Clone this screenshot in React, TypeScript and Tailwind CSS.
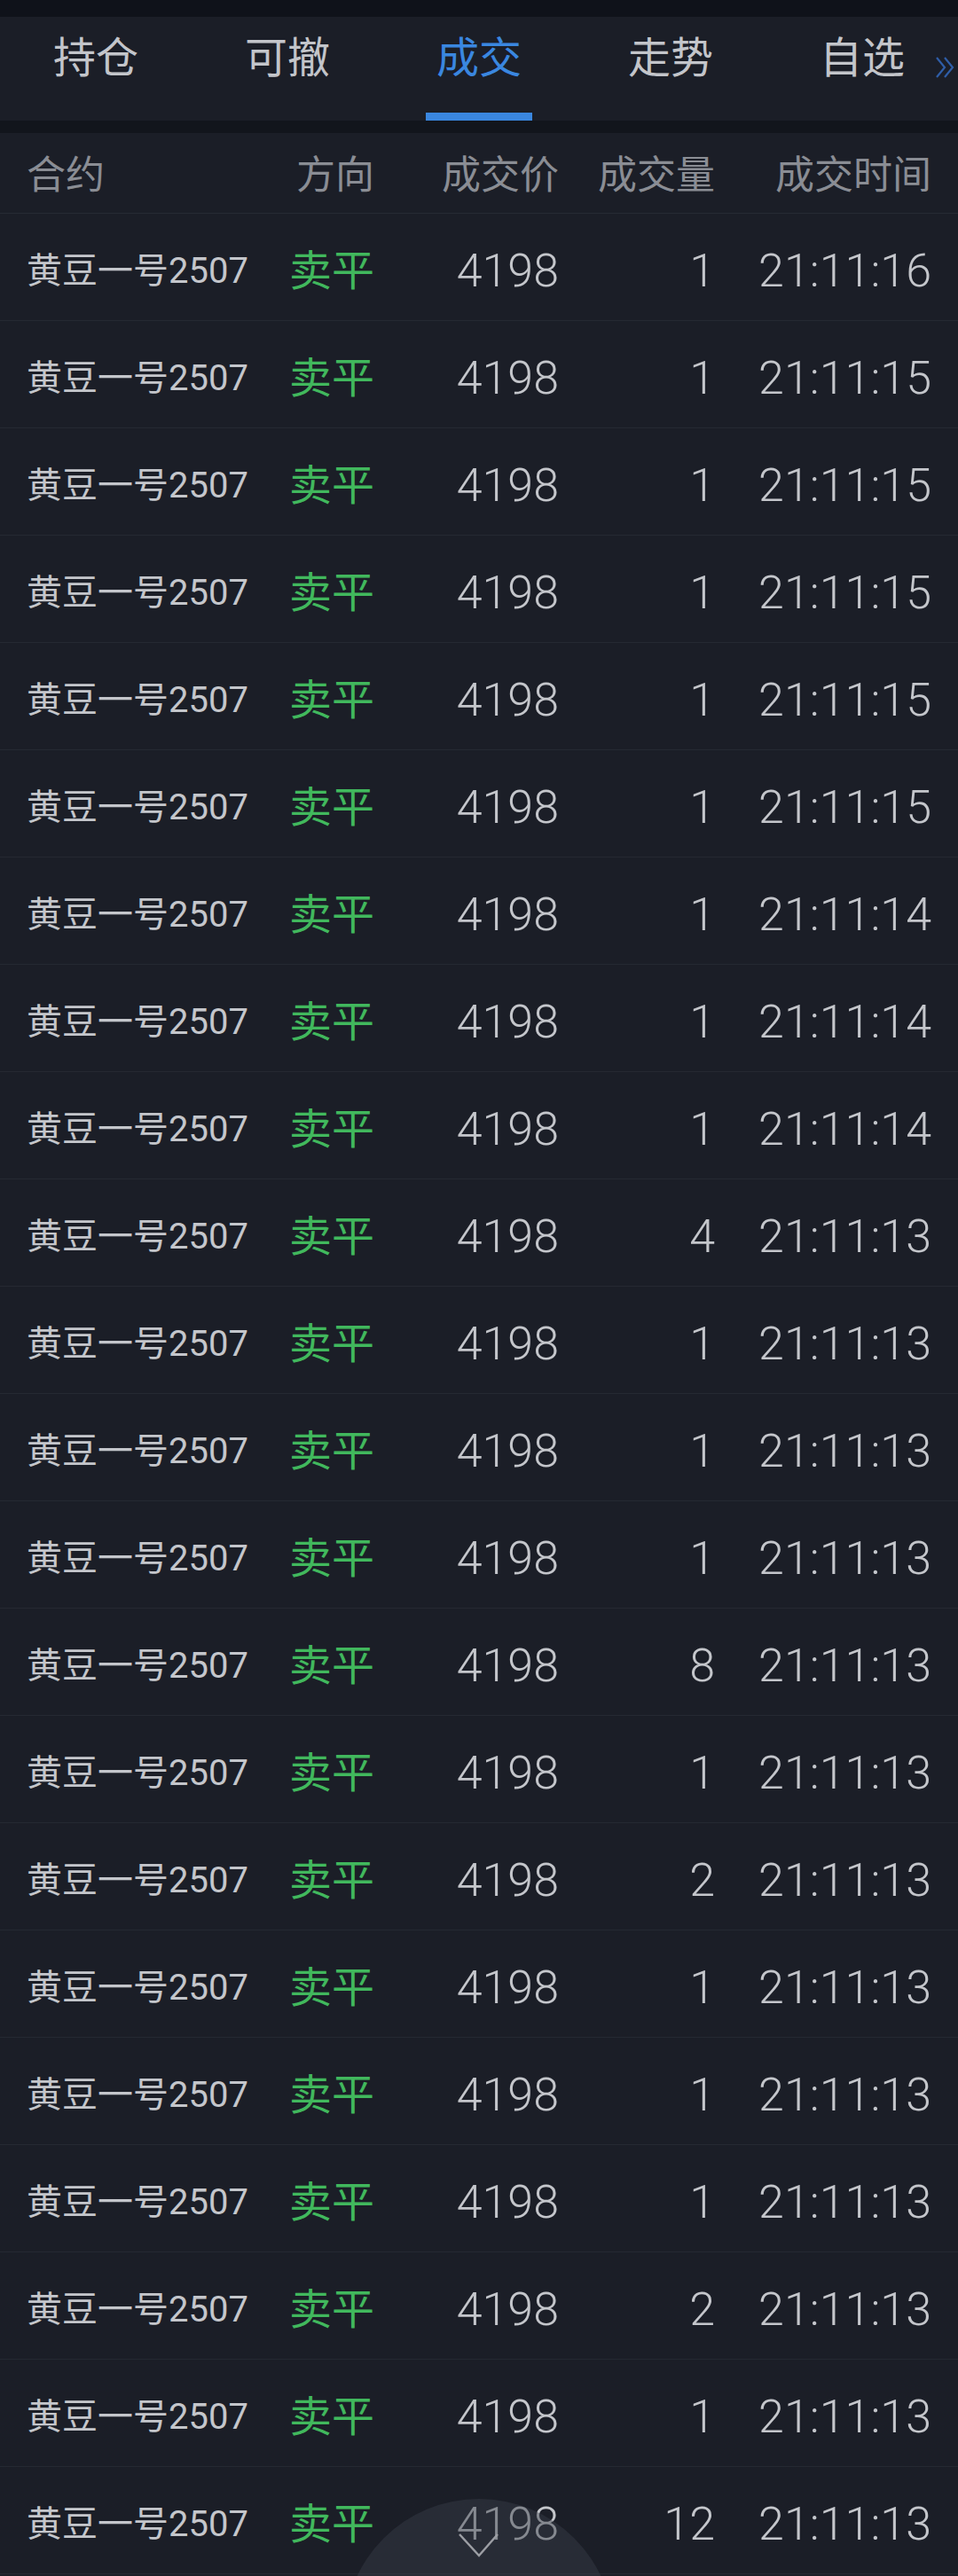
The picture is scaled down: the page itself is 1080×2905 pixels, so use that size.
import React from "react";

const tabs = ["持仓", "可撤", "成交", "走势", "自选"];

const qtys = [1, 1, 1, 1, 1, 1, 1, 1, 1, 4, 1, 1, 1, 8, 1, 2, 1, 1, 1, 2, 1, 12];
const secs = ["16", "15", "15", "15", "15", "15", "14", "14", "14", "13", "13", "13", "13", "13", "13", "13", "13", "13", "13", "13", "13", "13"];

const trades = qtys.map((q, i) => ({
  name: "黄豆一号2507",
  side: "卖平",
  price: "4198",
  qty: q,
  time: "21:11:" + secs[i],
}));

const App = () => {
  return (
    <div className="relative w-[1080px] h-[2905px] overflow-hidden bg-[#1b1e27] font-['Roboto','Noto_Sans_CJK_SC',sans-serif]">
      <div className="h-[19px] bg-[#0f121a]" />

      {/* tabs */}
      <div className="relative flex h-[117px]">
        {tabs.map((t, i) => (
          <div key={t} className="w-[216px] flex flex-col items-center justify-between">
            <span
              className={
                "pt-[23px] text-[48px] leading-none " +
                (i === 2 ? "text-[#3a87e0]" : "text-[#c3c5ca]")
              }
            >
              {t}
            </span>
            {i === 2 ? <div className="w-[120px] h-[9px] bg-[#3a87e0]" /> : <div className="h-[9px]" />}
          </div>
        ))}
        <svg className="absolute right-[3px] top-[45px]" width="22" height="24" viewBox="0 0 22 24" fill="none">
          <path d="M1 1 L10 12 L1 23" stroke="#2f5ea8" strokeWidth="2.2" />
          <path d="M10 1 L19 12 L10 23" stroke="#2f5ea8" strokeWidth="2.2" />
        </svg>
      </div>
      <div className="h-[14px] bg-[#12151c]" />

      {/* header */}
      <div className="grid grid-cols-[270px_122px_208px_176px_244px] px-[30px] h-[91px] items-center pt-[6px] border-b border-[#262a33] text-[44px] leading-none text-[#8a8d94]">
        <span>合约</span>
        <span className="text-right">方向</span>
        <span className="text-right">成交价</span>
        <span className="text-right">成交量</span>
        <span className="text-right">成交时间</span>
      </div>

      {trades.map((r, i) => (
        <div
          key={i}
          className="grid grid-cols-[270px_122px_208px_176px_244px] px-[30px] h-[121px] items-center pt-[9px] border-b border-[#252932] leading-none"
        >
          <span className="text-[40px] text-[#c4c6cb] whitespace-nowrap">{r.name}</span>
          <span className="text-right text-[48px] text-[#41b85d]">{r.side}</span>
          <span className="text-right text-[52px] font-light text-[#c4c6cb]">{r.price}</span>
          <span className="text-right text-[52px] font-light text-[#c4c6cb]">{r.qty}</span>
          <span className="text-right text-[52px] font-light text-[#c4c6cb]">{r.time}</span>
        </div>
      ))}

      {/* scroll-down button */}
      <div className="absolute left-[388px] top-[2818px] w-[304px] h-[304px] rounded-full bg-[#3a3e4a]/45" />
      <svg className="absolute left-[514px] top-[2854px]" width="52" height="34" viewBox="0 0 52 34" fill="none">
        <path d="M4 4 L26 28 L47 4" stroke="#9c9ea4" strokeWidth="2.5" />
      </svg>
    </div>
  );
};

export default App;
